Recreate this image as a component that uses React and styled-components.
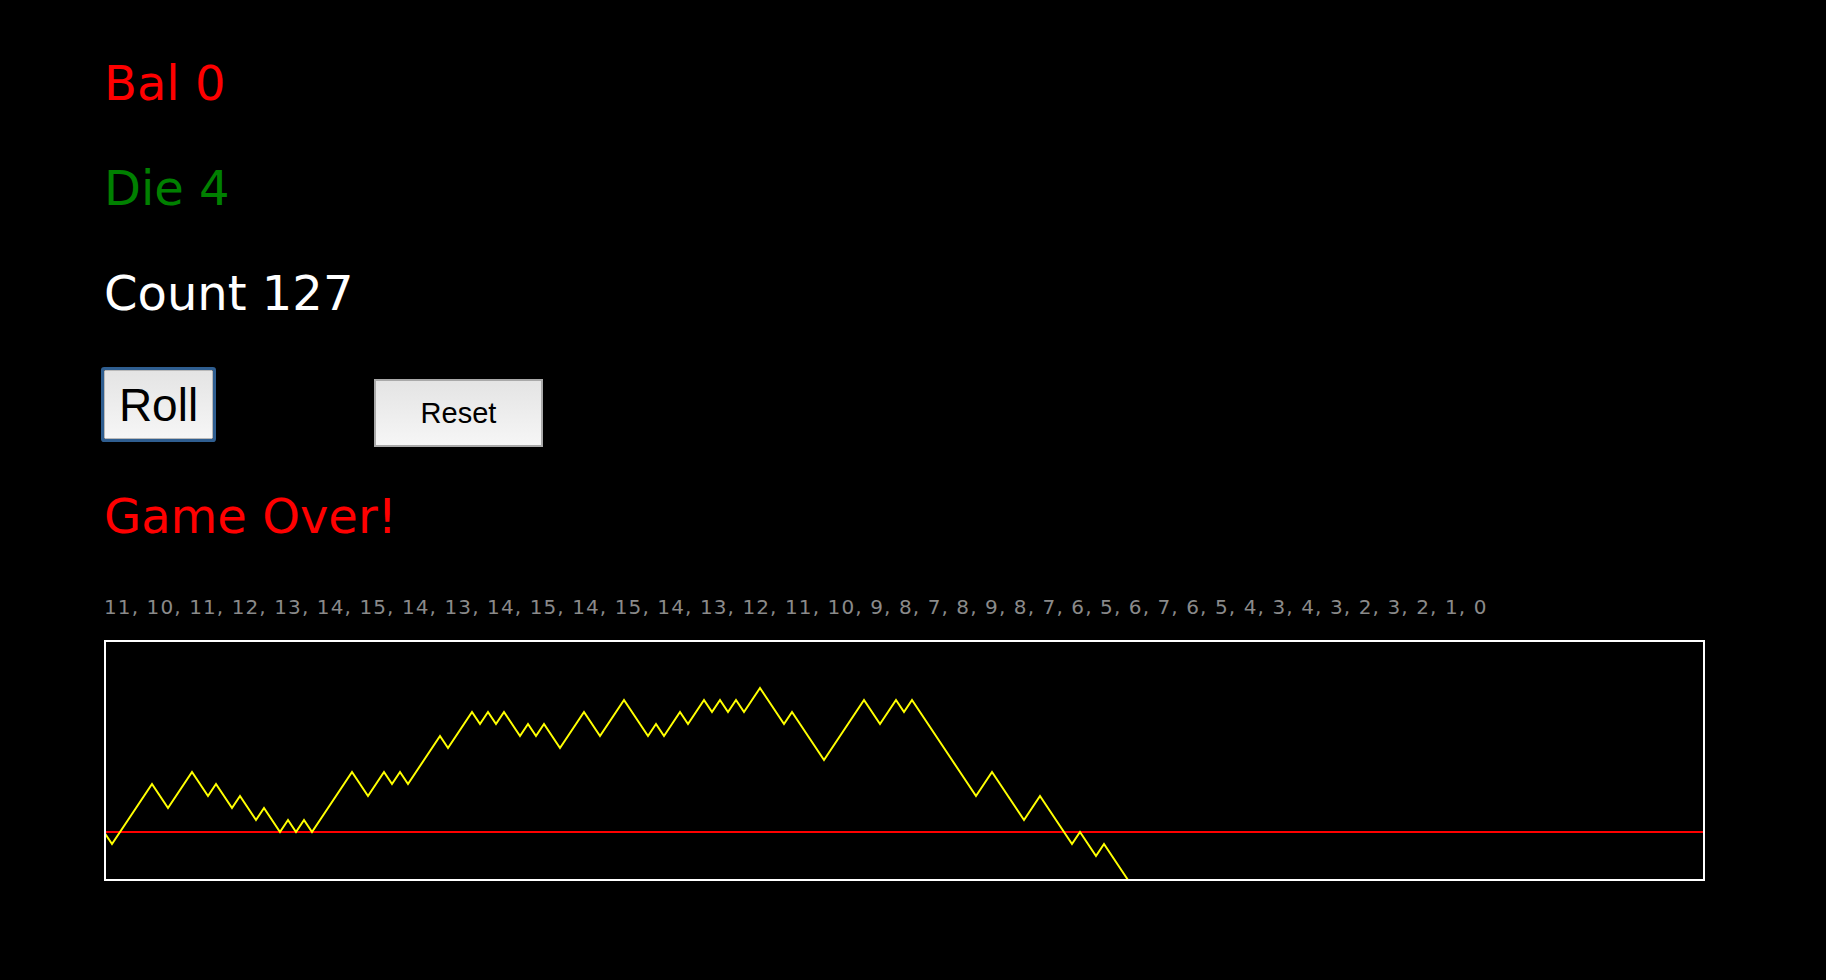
import React from 'react';
import styled, { createGlobalStyle } from 'styled-components';

const GlobalStyle = createGlobalStyle`
    html, body {
        margin: 0;
        padding: 0;
        background: #000000;
    }
`;

// balance after each roll, first value is the starting balance
const history = [
    4, 3, 4, 5, 6, 7, 8, 7, 6, 7, 8, 9, 8, 7, 8, 7, 6, 7, 6, 5,
    6, 5, 4, 5, 4, 5, 4, 5, 6, 7, 8, 9, 8, 7, 8, 9, 8, 9, 8, 9,
    10, 11, 12, 11, 12, 13, 14, 13, 14, 13, 14, 13, 12, 13, 12, 13, 12, 11, 12, 13,
    14, 13, 12, 13, 14, 15, 14, 13, 12, 13, 12, 13, 14, 13, 14, 15, 14, 15, 14, 15,
    14, 15, 16, 15, 14, 13, 14, 13, 12,
    11, 10, 11, 12, 13, 14, 15, 14, 13, 14, 15, 14, 15, 14, 13, 12, 11, 10, 9, 8,
    7, 8, 9, 8, 7, 6, 5, 6, 7, 6, 5, 4, 3, 4, 3, 2, 3, 2, 1, 0,
];

const CHART_W = 1601;
const CHART_H = 241;
const STEP_X = 8;
const STEP_Y = 12;

const Page = styled.div`
    padding: 55px 0 0 104px;
    font-family: "DejaVu Sans", Verdana, sans-serif;
`;

const Stat = styled.p`
    margin: 0;
    font-size: 48px;
    line-height: 57px;
    color: ${props => props.$color};

    & + & {
        margin-top: 48px;
    }
`;

const Controls = styled.div`
    display: flex;
    align-items: flex-start;
    gap: 161px;
    margin-top: 48px;
`;

const Button = styled.button`
    display: flex;
    align-items: center;
    justify-content: center;
    box-sizing: border-box;
    padding: 0;
    margin: 0;
    font-family: "Liberation Sans", Arial, sans-serif;
    color: #000000;
    background: linear-gradient(#e4e4e4, #f6f6f6);
    cursor: pointer;
`;

const RollButton = styled(Button)`
    width: 109px;
    height: 69px;
    font-size: 46px;
    border: 1px solid #b9b9b9;
    border-radius: 1px;
    box-shadow: 0 0 0 3px #2f5e90;
`;

const ResetButton = styled(Button)`
    width: 169px;
    height: 68px;
    margin-top: 9px;
    font-size: 29px;
    border: 2px solid #a9a9a9;
    border-radius: 0;
`;

const Message = styled(Stat)`
    margin-top: 41px;
`;

const History = styled.div`
    margin-top: 50px;
    font-size: 20px;
    line-height: 24px;
    letter-spacing: 1.1px;
    color: #8a8a8a;
`;

const Chart = styled.svg`
    display: block;
    margin-top: 21px;
`;

function WalkChart({ values }) {
    const toY = v => CHART_H - 1 - v * STEP_Y;
    const points = values.map((v, i) => `${i * STEP_X},${toY(v)}`).join(' ');
    const base = toY(values[0]);

    return (
        <Chart width={CHART_W} height={CHART_H} viewBox={`0 0 ${CHART_W} ${CHART_H}`}>
            <line x1="0" y1={base} x2={CHART_W - 1} y2={base} stroke="#ff0000" strokeWidth="2" />
            <polyline points={points} fill="none" stroke="#ffff00" strokeWidth="2" strokeLinejoin="miter" />
            <rect x="1" y="1" width={CHART_W - 2} height={CHART_H - 2} fill="none" stroke="#ffffff" strokeWidth="2" />
        </Chart>
    );
}

function App() {
    const balance = history[history.length - 1];

    return (
        <Page>
            <GlobalStyle />
            <Stat $color="#ff0000">Bal {balance}</Stat>
            <Stat $color="#008000">Die 4</Stat>
            <Stat $color="#ffffff">Count 127</Stat>
            <Controls>
                <RollButton>Roll</RollButton>
                <ResetButton>Reset</ResetButton>
            </Controls>
            <Message $color="#ff0000">Game Over!</Message>
            <History>{history.slice(-40).join(', ')}</History>
            <WalkChart values={history} />
        </Page>
    );
}

export default App;
